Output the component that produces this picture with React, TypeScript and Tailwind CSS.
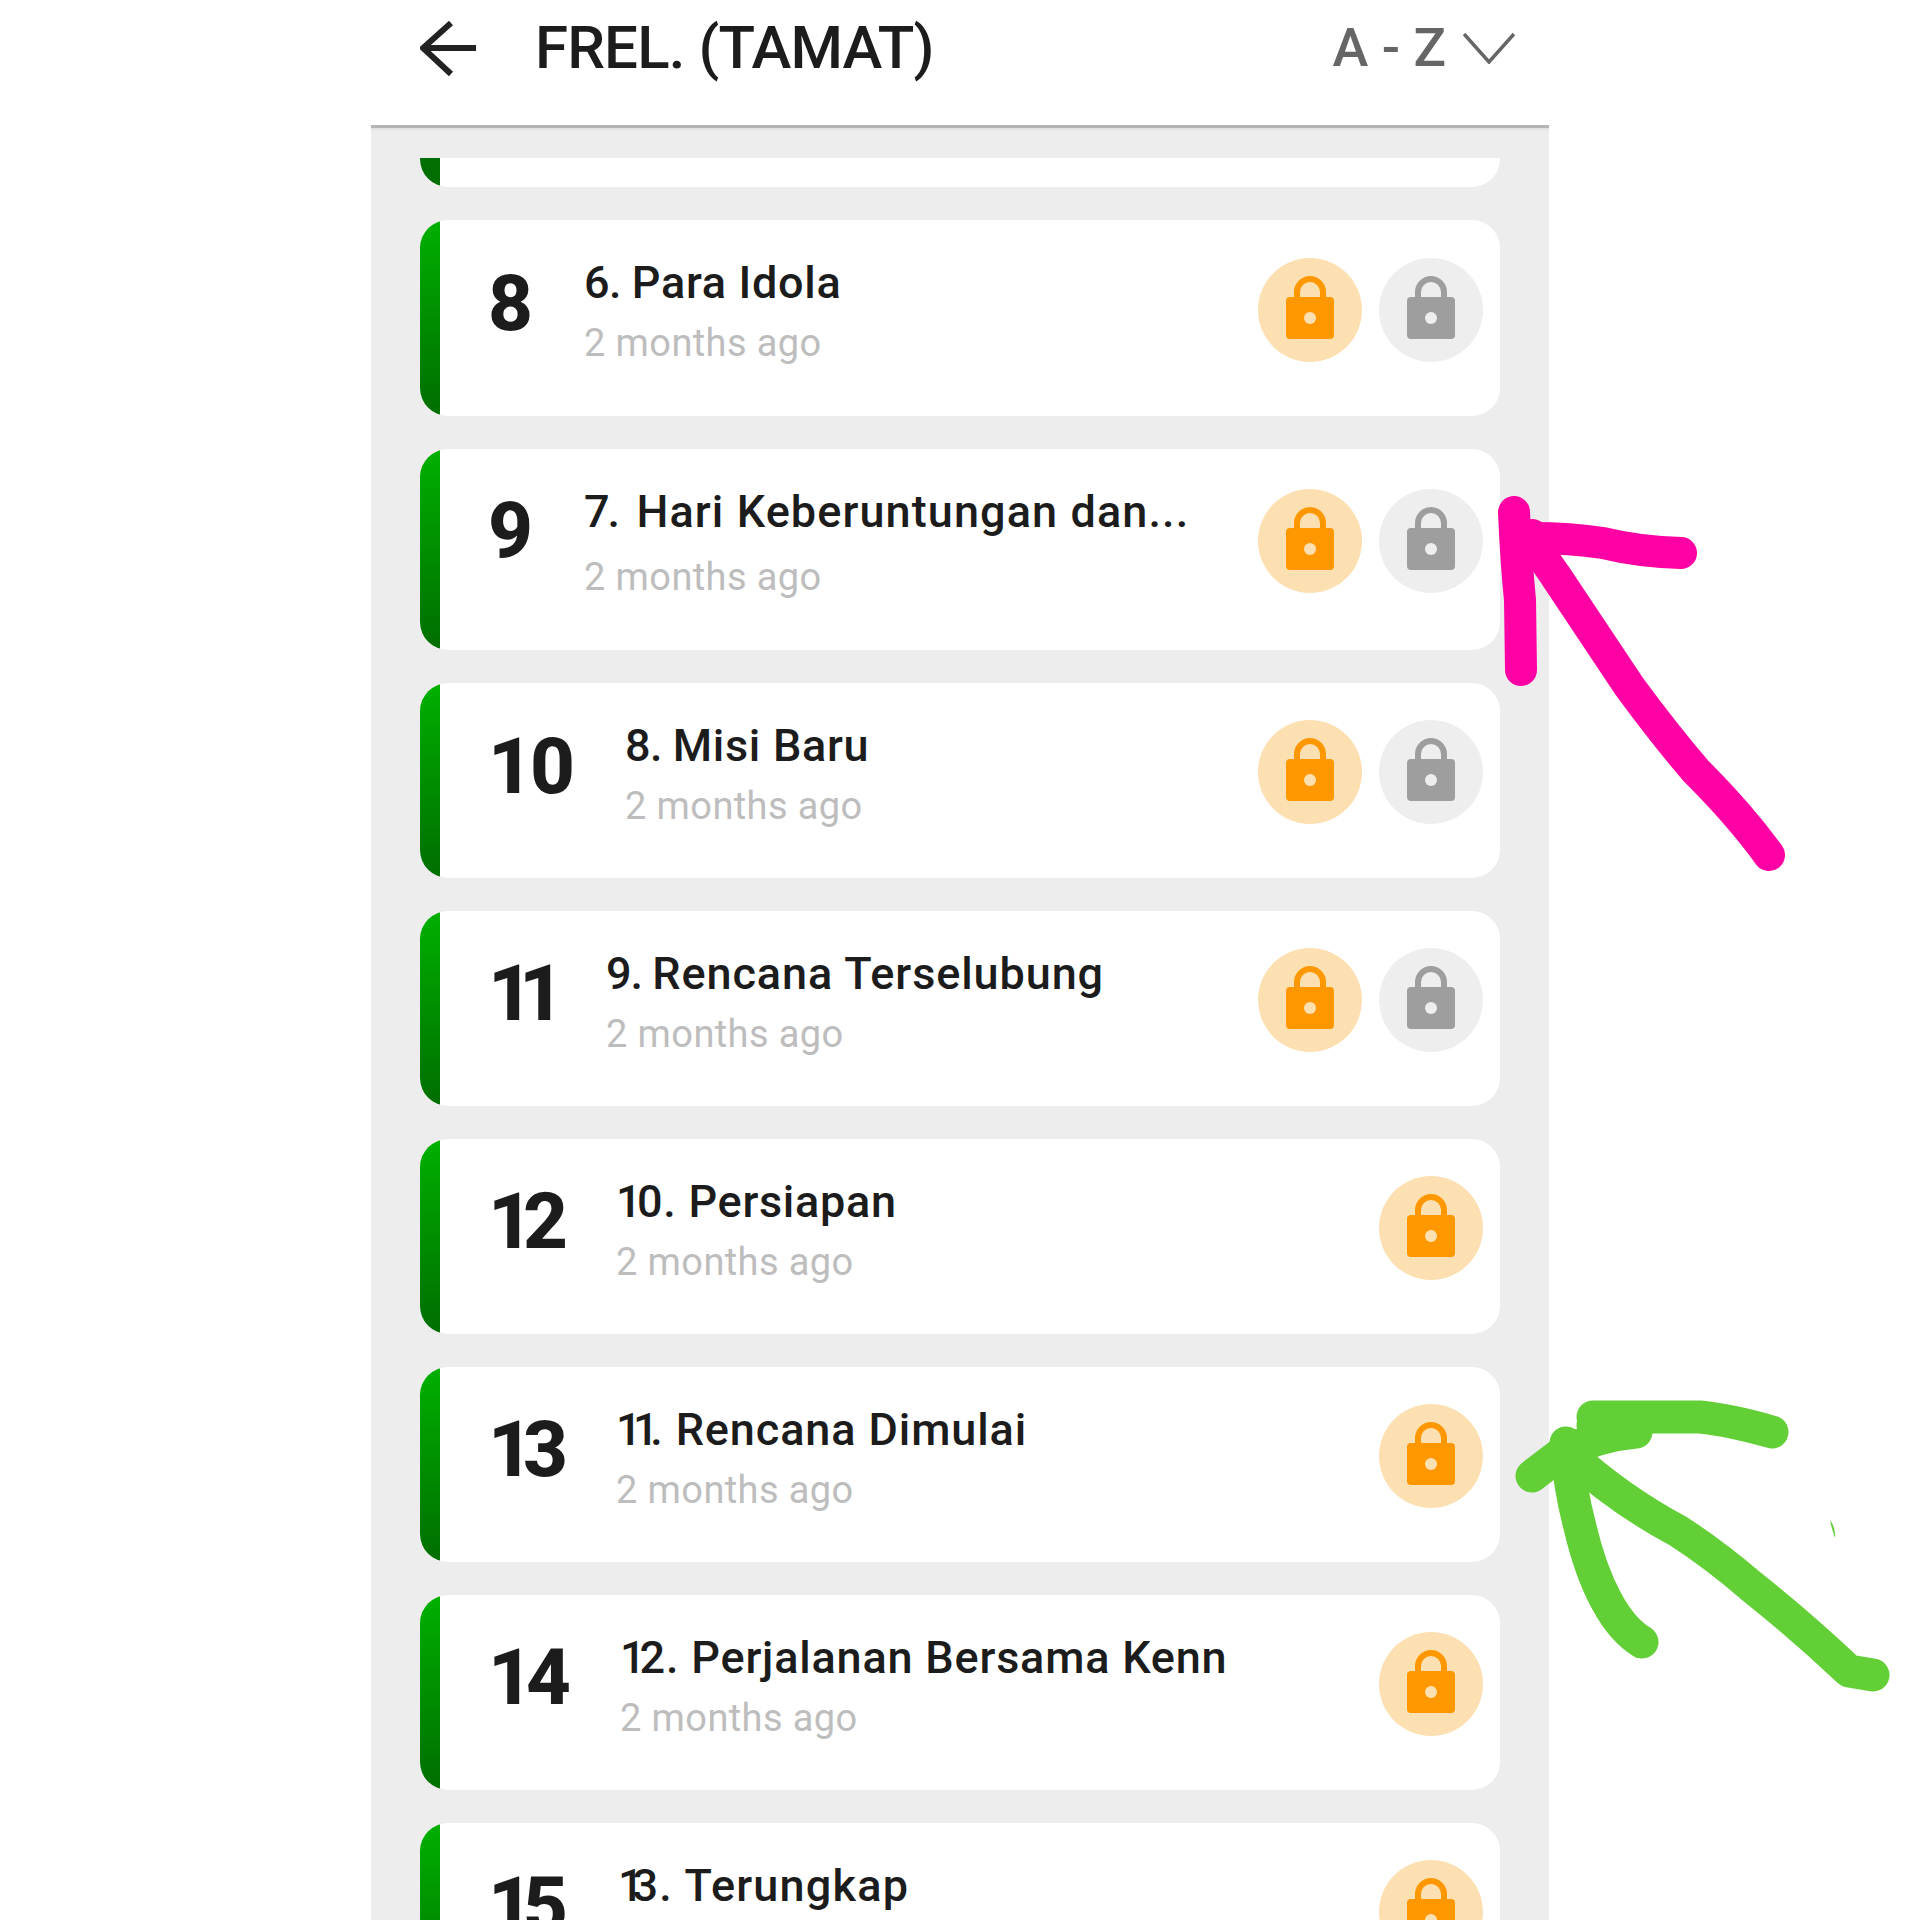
const rows = [
  { no: "8", lead: "6. ", leadTrack: "tracking-[-0.5px]", title: "Para Idola", titleTrack: "tracking-[0.7px]", numW: "w-[96px]", track: "tracking-normal", locks: 2, cardH: "h-[196px]", numTop: "pt-[44px]", subTop: "mt-[11px]", lockTop: "mt-[38px]" },
  { no: "9", lead: "7.  ", leadTrack: "tracking-[-2px]", title: "Hari Keberuntungan dan...", titleTrack: "tracking-[1.1px]", numW: "w-[96px]", track: "tracking-normal", locks: 2, cardH: "h-[201px]", numTop: "pt-[42px]", subTop: "mt-[16px]", lockTop: "mt-[40px]" },
  { no: "10", lead: "8. ", leadTrack: "tracking-[-0.5px]", title: "Misi Baru", titleTrack: "tracking-[0.7px]", numW: "w-[137px]", track: "tracking-[-3px]", locks: 2, cardH: "h-[195px]", numTop: "pt-[44px]", subTop: "mt-[11px]", lockTop: "mt-[37px]" },
  { no: "11", lead: "9. ", leadTrack: "tracking-[-1px]", title: "Rencana Terselubung", titleTrack: "tracking-[0.9px]", numW: "w-[118px]", track: "tracking-[-14px]", locks: 2, cardH: "h-[195px]", numTop: "pt-[43px]", subTop: "mt-[11px]", lockTop: "mt-[37px]" },
  { no: "12", lead: "1", leadTrack: "tracking-[-4.5px]", title: "0. Persiapan", titleTrack: "tracking-[0.7px]", numW: "w-[128px]", track: "tracking-[-10px]", locks: 1, cardH: "h-[195px]", numTop: "pt-[43px]", subTop: "mt-[11px]", lockTop: "mt-[37px]" },
  { no: "13", lead: "11", leadTrack: "tracking-[-8.5px]", title: ". Rencana Dimulai", titleTrack: "tracking-[0.9px]", numW: "w-[128px]", track: "tracking-[-10px]", locks: 1, cardH: "h-[195px]", numTop: "pt-[43px]", subTop: "mt-[11px]", lockTop: "mt-[37px]" },
  { no: "14", lead: "1", leadTrack: "tracking-[-6px]", title: "2. Perjalanan Bersama Kenn", titleTrack: "tracking-[0.8px]", numW: "w-[132px]", track: "tracking-[-7px]", locks: 1, cardH: "h-[195px]", numTop: "pt-[43px]", subTop: "mt-[11px]", lockTop: "mt-[37px]" },
  { no: "15", lead: "1", leadTrack: "tracking-[-11px]", title: "3. Terungkap", titleTrack: "tracking-[1.2px]", numW: "w-[130px]", track: "tracking-[-10px]", locks: 1, cardH: "h-[195px]", numTop: "pt-[43px]", subTop: "mt-[11px]", lockTop: "mt-[37px]" },
];

const Lock = ({ grey }: { grey?: boolean }) => {
  const fg = grey ? "#9e9e9e" : "#ff9800";
  const bg = grey ? "#eeeeee" : "#fde0b2";
  return (
    <div className={`flex h-[104px] w-[104px] items-center justify-center rounded-full ${grey ? "bg-[#eeeeee]" : "bg-[#fde0b2]"}`}>
      <svg width="48" height="64" viewBox="0 0 48 64" className="mb-[4px]">
        <path d="M11 24V16a13 13 0 0 1 26 0v8" fill="none" stroke={fg} strokeWidth="6" />
        <rect x="0" y="21" width="48" height="42" rx="4" fill={fg} />
        <circle cx="24" cy="42" r="6" fill={bg} />
      </svg>
    </div>
  );
};

const Row = ({ row }: { row: (typeof rows)[number] }) => (
  <div className={`flex shrink-0 overflow-hidden rounded-[28px] bg-white ${row.cardH}`}>
    <div className="w-[20px] shrink-0 rounded-l-[28px] bg-gradient-to-b from-[#00b000] to-[#006e00]" />
    <div className={`ml-[48px] shrink-0 text-[78px] font-extrabold leading-[80px] text-[#1c1c1c] ${row.numW} ${row.numTop}`}>
      <span className={row.track}>{row.no}</span>
    </div>
    <div className="min-w-0 flex-1 pt-[37px]">
      <div className="whitespace-pre text-[45px] font-medium leading-[52px] text-[#1c1c1c]">
        <span className={row.leadTrack}>{row.lead}</span>
        <span className={row.titleTrack}>{row.title}</span>
      </div>
      <div className={`text-[38px] leading-[46px] tracking-[0.4px] text-[#bdbdbd] ${row.subTop}`}>2 months ago</div>
    </div>
    <div className={`mr-[17px] flex gap-[17px] ${row.lockTop}`}>
      <Lock />
      {row.locks === 2 && <Lock grey />}
    </div>
  </div>
);

export default function App() {
  return (
    <div className="relative h-[1920px] w-[1920px] overflow-hidden bg-white font-['Roboto',sans-serif]">
      <div className="mx-auto flex h-full w-[1178px] flex-col">
        {/* header */}
        <div className="flex h-[128px] shrink-0 items-start border-b-[3px] border-[#b4b4b4] bg-white pl-[49px] pr-[34px] pt-[20px]">
          <svg width="58" height="56" viewBox="0 0 58 56" className="mt-[1px]" fill="none" stroke="#222222" strokeWidth="6">
            <path d="M56 27H4" />
            <path d="M31 2L3 27L31 53" />
          </svg>
          <div className="ml-[57px] text-[60px] font-medium leading-[56px] tracking-[-0.85px] text-[#1c1c1c]">FREL. (TAMAT)</div>
          <div className="ml-auto text-[54px] font-medium leading-[56px] text-[#666666]">A - Z</div>
          <svg width="52" height="32" viewBox="0 0 52 32" className="ml-[17px] mt-[12px]" fill="none" stroke="#666666" strokeWidth="3.5">
            <path d="M1 2L26 30L51 2" />
          </svg>
        </div>
        {/* list */}
        <div className="flex min-h-0 flex-1 flex-col gap-[33px] overflow-hidden border-t-2 border-[#e2e2e2] bg-[#ededed] px-[49px] pt-[28px]">
          <div className="flex h-[29px] shrink-0 overflow-hidden rounded-b-[28px] bg-white">
            <div className="w-[20px] rounded-bl-[28px] bg-[#006e00]" />
          </div>
          {rows.map((row) => (
            <Row key={row.no} row={row} />
          ))}
        </div>
      </div>
      {/* marker strokes drawn over the screenshot */}
      <svg className="pointer-events-none absolute left-0 top-0" width="1920" height="1920" viewBox="0 0 1920 1920" fill="none" strokeLinecap="round" strokeLinejoin="round">
        <g stroke="#ff00a5" strokeWidth="32">
          <path d="M1514 512Q1516 560 1520 600L1521 670" />
          <path d="M1532 538Q1570 538 1603 543Q1640 552 1681 553" />
          <path d="M1532 535Q1540 555 1555 575L1629 686Q1665 735 1696 771Q1740 815 1769 855" />
        </g>
        <g stroke="#62cf37" strokeWidth="33">
          <path d="M1593 1417H1700Q1730 1420 1772 1432" />
          <path d="M1593 1425L1632 1430" />
          <path d="M1532 1476L1562 1453Q1600 1435 1636 1432" />
          <path d="M1566 1443Q1570 1490 1580 1527Q1590 1570 1606 1600Q1622 1630 1642 1642" />
          <path d="M1570 1455Q1620 1500 1678 1531Q1715 1555 1751 1586Q1800 1625 1849 1671L1873 1675" />
        </g>
        <path d="M1830 1520Q1836 1528 1835 1538Q1832 1530 1830 1520Z" fill="#62cf37" />
      </svg>
    </div>
  );
}
